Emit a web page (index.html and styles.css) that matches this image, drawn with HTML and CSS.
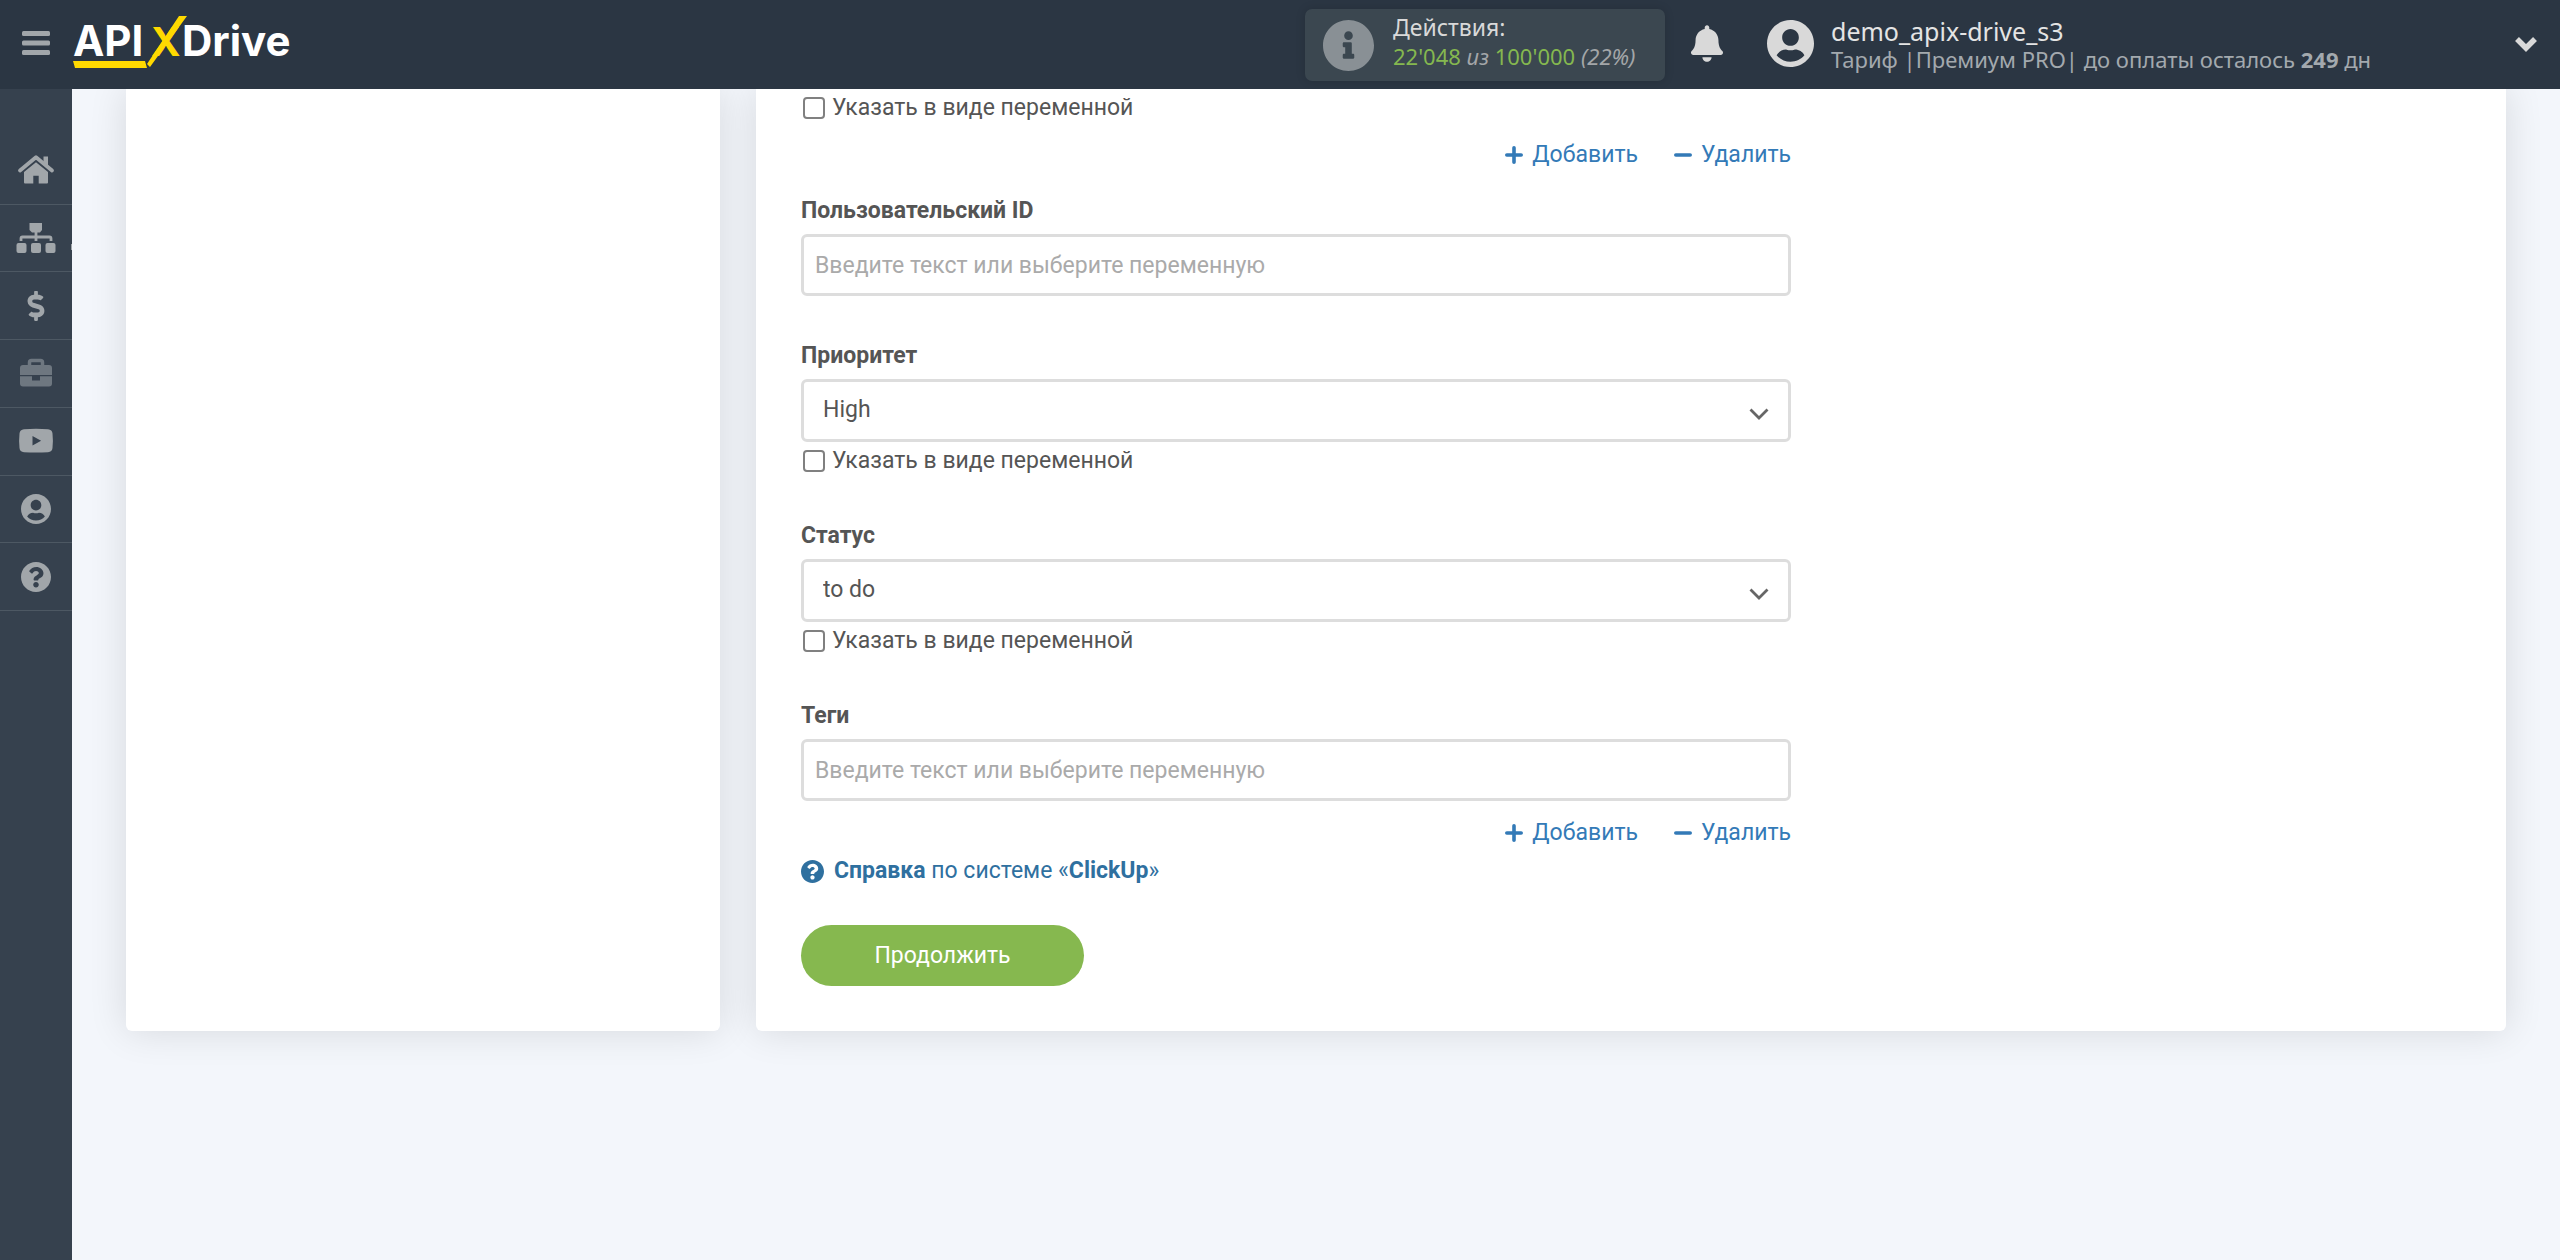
FILE: index.html
```html
<!DOCTYPE html>
<html lang="ru">
<head>
<meta charset="utf-8">
<meta name="viewport" content="width=device-width, initial-scale=1">
<title>ApiX-Drive</title>
<link rel="stylesheet" href="styles.css">
</head>
<body>
<svg class="sprite" aria-hidden="true">
  <symbol id="i-user" viewBox="0 8 496 496"><path d="M248 8C111 8 0 119 0 256s111 248 248 248 248-111 248-248S385 8 248 8zm0 96c48.600 0 88 39.400 88 88s-39.400 88-88 88-88-39.400-88-88 39.400-88 88-88zm0 344c-58.700 0-111.300-26.600-146.500-68.200 18.800-35.400 55.600-59.800 98.500-59.800 2.400 0 4.800.4 7.100 1.100 13 4.200 26.600 6.900 40.900 6.900 14.300 0 28-2.700 40.900-6.900 2.300-.7 4.700-1.100 7.100-1.100 42.900 0 79.700 24.400 98.500 59.800C359.300 421.400 306.700 448 248 448z"/></symbol>
  <symbol id="i-question" viewBox="8 8 496 496"><path d="M504 256c0 136.997-111.043 248-248 248S8 392.997 8 256C8 119.083 119.043 8 256 8s248 111.083 248 248zM262.655 90c-54.497 0-89.255 22.957-116.549 63.758-3.536 5.286-2.353 12.415 2.715 16.258l34.699 26.310c5.205 3.947 12.621 3.008 16.665-2.122 17.864-22.658 30.113-35.797 57.303-35.797 20.429 0 45.698 13.148 45.698 32.958 0 14.976-12.363 22.667-32.534 33.976C247.128 238.528 216 254.941 216 296v4c0 6.627 5.373 12 12 12h56c6.627 0 12-5.373 12-12v-1.333c0-28.462 83.186-29.647 83.186-106.667 0-58.002-60.165-102-116.531-102zM256 338c-25.365 0-46 20.635-46 46 0 25.364 20.635 46 46 46s46-20.636 46-46c0-25.365-20.635-46-46-46z"/></symbol>
  <symbol id="i-plus" viewBox="0 0 18 18"><path d="M9 1.800v14.400M1.800 9h14.400" stroke="currentColor" stroke-width="3.600" stroke-linecap="round"/></symbol>
  <symbol id="i-minus" viewBox="0 0 18 18"><path d="M1.800 9h14.400" stroke="currentColor" stroke-width="3.600" stroke-linecap="round"/></symbol>
  <symbol id="i-arrow" viewBox="0 0 20 12"><path d="M1.500 1.500 10 10l8.500-8.500" fill="none" stroke="currentColor" stroke-width="2.800"/></symbol>
</svg>

<header class="header">
  <button class="burger" type="button" aria-label="Меню">
    <svg viewBox="0 0 28 24" width="28" height="24"><rect width="28" height="5" rx="1.500"/><rect y="9.500" width="28" height="5" rx="1.500"/><rect y="19" width="28" height="5" rx="1.500"/></svg>
  </button>
  <a class="logo" href="#" aria-label="APIXDrive">
    <svg viewBox="0 0 222 60" width="222" height="60">
      <text class="logo__word" x="1" y="44">API</text>
      <text class="logo__word logo__word--x" x="79" y="44">X</text>
      <text class="logo__word" x="110" y="44">Drive</text>
      <path class="logo__mark" d="M75 52 107 4h8L78 55zM1 49h72l2 7H3z"/>
    </svg>
  </a>
  <div class="actions">
    <svg class="actions__icon" viewBox="8 8 496 496"><path d="M256 8C119.043 8 8 119.083 8 256c0 136.997 111.043 248 248 248s248-111.003 248-248C504 119.083 392.957 8 256 8zm0 110c23.196 0 42 18.804 42 42s-18.804 42-42 42-42-18.804-42-42 18.804-42 42-42zm56 254c0 6.627-5.373 12-12 12h-88c-6.627 0-12-5.373-12-12v-24c0-6.627 5.373-12 12-12h12v-64h-12c-6.627 0-12-5.373-12-12v-24c0-6.627 5.373-12 12-12h64c6.627 0 12 5.373 12 12v100h12c6.627 0 12 5.373 12 12v24z"/></svg>
    <div>
      <div class="actions__title">Действия:</div>
      <div class="actions__count"><span class="num">22'048</span> <i>из</i> <span class="num">100'000</span> <i>(22%)</i></div>
    </div>
  </div>
  <button class="bell" type="button" aria-label="Уведомления">
    <svg viewBox="0 0 448 512" width="32" height="37"><path d="M224 512c35.320 0 63.970-28.650 63.970-64H160.030c0 35.350 28.650 64 63.970 64zm215.390-149.710c-19.320-20.760-55.470-51.990-55.470-154.290 0-77.700-54.480-139.900-127.940-155.160V32c0-17.670-14.320-32-31.980-32s-31.980 14.330-31.980 32v20.840C118.560 68.100 64.080 130.300 64.080 208c0 102.300-36.150 133.530-55.470 154.290-6 6.450-8.660 14.160-8.610 21.710.11 16.400 12.980 32 32.100 32h383.800c19.120 0 32-15.600 32.100-32 .05-7.550-2.610-15.270-8.610-21.710z"/></svg>
  </button>
  <div class="account">
    <svg class="account__icon"><use href="#i-user"/></svg>
    <div class="account__text">
      <div class="account__name">demo_apix-drive_s3</div>
      <div class="account__plan">Тариф |Премиум PRO| до оплаты осталось <b>249</b> дн</div>
    </div>
    <button class="account__toggle" type="button" aria-label="Профиль">
      <svg viewBox="0 0 24 16" width="24" height="16"><path d="m3 3 9 9 9-9" fill="none" stroke="currentColor" stroke-width="5.500"/></svg>
    </button>
  </div>
</header>

<div class="layout">
  <nav class="sidebar">
    <ul class="menu">
      <li class="menu__item"><a class="menu__link" href="#" aria-label="Главная"><svg viewBox="0 0 40 40"><path d="m4 20.500 16-13.300 16 13.300" fill="none" stroke="currentColor" stroke-width="3.800" stroke-linecap="round" stroke-linejoin="round"/><path d="M27.500 6.500H32v9.500l-4.500-4zM8 22l12-9.800L32 22v10.500q0 1-1 1h-8.300V25.700h-5.400v7.800H9q-1 0-1-1z"/></svg></a></li>
      <li class="menu__item menu__item--marker"><a class="menu__link" href="#" aria-label="Связи"><svg viewBox="0 0 40 40"><path d="M13.500 5h12.500v7l-2 2.500H16l-2.500-2.500z"/><path d="M20 14v9M5 23v-2.500q0-1.500 1.500-1.500h27q1.500 0 1.500 1.500V23" fill="none" stroke="currentColor" stroke-width="2.800"/><rect x=".5" y="25" width="10" height="10" rx="2"/><rect x="15" y="25" width="10" height="10" rx="2"/><rect x="29.500" y="25" width="10" height="10" rx="2"/></svg></a></li>
      <li class="menu__item"><a class="menu__link" href="#" aria-label="Оплата"><svg class="menu__icon--s" viewBox="-112 0 512 512"><path d="M209.200 233.400l-108-31.600C88.700 198.200 80 186.500 80 173.500c0-16.300 13.200-29.500 29.500-29.500h66.300c12.200 0 24.200 3.700 34.200 10.500 6.100 4.100 14.300 3.100 19.500-2l34.800-34c7.100-6.900 6.100-18.400-1.800-24.500C238 74.800 207.400 64.100 176 64V16c0-8.800-7.200-16-16-16h-32c-8.800 0-16 7.200-16 16v48h-2.500C45.800 64-5.400 118.700.5 183.600c4.200 46.100 39.400 83.600 83.800 96.600l102.500 30c12.500 3.700 21.200 15.300 21.200 28.300 0 16.300-13.200 29.500-29.500 29.500h-66.300C100 368 88 364.300 78 357.500c-6.100-4.100-14.300-3.100-19.500 2l-34.800 34c-7.100 6.900-6.100 18.400 1.800 24.500 24.500 19.200 55.100 29.900 86.500 30v48c0 8.800 7.200 16 16 16h32c8.800 0 16-7.200 16-16v-48.200c46.600-.9 90.300-28.600 105.700-72.700 21.500-61.600-14.600-124.800-72.500-141.700z"/></svg></a></li>
      <li class="menu__item menu__item--dim"><a class="menu__link" href="#" aria-label="Проекты"><svg viewBox="0 0 40 40"><path d="M13.500 13V9.500q0-2 2-2h9q2 0 2 2V13" fill="none" stroke="currentColor" stroke-width="3.500"/><path d="M4 22v-7q0-3 3-3h26q3 0 3 3v7zM4 23.300h12V27.500h8v-4.200h12V30.500q0 3-3 3H7q-3 0-3-3z"/></svg></a></li>
      <li class="menu__item"><a class="menu__link" href="#" aria-label="Видео"><svg viewBox="0 0 40 40"><path fill-rule="evenodd" d="M8 8.300q12-1.300 24 0 4.200.5 4.500 4.200.8 7 0 14.500-.4 3.800-4.500 4.200-12 .8-24 0-4.200-.5-4.500-4.200-.8-7 0-14.500.4-3.800 4.500-4.200zM16.500 15v9.600l8.600-4.800z"/></svg></a></li>
      <li class="menu__item"><a class="menu__link" href="#" aria-label="Профиль"><svg class="menu__icon--s"><use href="#i-user"/></svg></a></li>
      <li class="menu__item"><a class="menu__link" href="#" aria-label="Помощь"><svg class="menu__icon--s"><use href="#i-question"/></svg></a></li>
    </ul>
  </nav>

  <main class="content">
    <aside class="card card--side"></aside>
    <form class="card card--main">
      <div class="form">
        <label class="check"><input class="check__box" type="checkbox">Указать в виде переменной</label>
        <div class="links links--top">
          <a class="link" href="#"><svg class="link__icon"><use href="#i-plus"/></svg>Добавить</a>
          <a class="link" href="#"><svg class="link__icon"><use href="#i-minus"/></svg>Удалить</a>
        </div>

        <div class="field field--text">
          <label class="field__label" for="custom-id">Пользовательский ID</label>
          <input class="input" id="custom-id" type="text" placeholder="Введите текст или выберите переменную">
        </div>

        <div class="field">
          <label class="field__label" for="priority">Приоритет</label>
          <div class="select">
            <select class="select__control" id="priority"><option>High</option></select>
            <svg class="select__arrow"><use href="#i-arrow"/></svg>
          </div>
          <label class="check"><input class="check__box" type="checkbox">Указать в виде переменной</label>
        </div>

        <div class="field">
          <label class="field__label" for="status">Статус</label>
          <div class="select">
            <select class="select__control" id="status"><option>to do</option></select>
            <svg class="select__arrow"><use href="#i-arrow"/></svg>
          </div>
          <label class="check"><input class="check__box" type="checkbox">Указать в виде переменной</label>
        </div>

        <div class="field field--last">
          <label class="field__label" for="tags">Теги</label>
          <input class="input" id="tags" type="text" placeholder="Введите текст или выберите переменную">
        </div>
        <div class="links links--bottom">
          <a class="link" href="#"><svg class="link__icon"><use href="#i-plus"/></svg>Добавить</a>
          <a class="link" href="#"><svg class="link__icon"><use href="#i-minus"/></svg>Удалить</a>
        </div>

        <a class="help" href="#"><svg class="help__icon"><use href="#i-question"/></svg><span><b>Справка</b> по системе «<b>ClickUp</b>»</span></a>
        <button class="submit" type="button">Продолжить</button>
      </div>
    </form>
  </main>
</div>
</body>
</html>
```

FILE: styles.css
```css
* {
  box-sizing: border-box;
}

body {
  margin: 0;
  min-height: 100vh;
  display: flex;
  flex-direction: column;
  background: #f3f6fb;
  color: #555;
  font: 23px/34px Roboto, "Liberation Sans", sans-serif;
}

button,
input,
select {
  font: inherit;
  color: inherit;
}

svg {
  display: block;
  fill: currentColor;
}

a {
  text-decoration: none;
}

.sprite {
  display: none;
}

/* Header */
.header {
  position: relative;
  z-index: 2;
  display: flex;
  align-items: center;
  height: 89px;
  background: #2b3643;
  color: #d9d9d9;
  font-family: "Noto Sans", "Open Sans", sans-serif;
}

.burger,
.bell,
.account__toggle {
  padding: 0;
  border: 0;
  background: none;
  cursor: pointer;
}

.burger {
  margin: 0 22px 4px;
  color: #a1a6aa;
}

.logo {
  margin-bottom: 5px;
}

.logo__word {
  fill: #fff;
  font: 700 42px Inter, sans-serif;
}

.logo__word--x {
  font-size: 40px;
}

.logo__word--x,
.logo__mark {
  fill: #ffd900;
}

.actions {
  display: flex;
  gap: 19px;
  width: 360px;
  height: 72px;
  margin-left: auto;
  padding: 2px 18px;
  border-radius: 7px;
  background: #3b4750;
  box-shadow: 0 0 10px rgba(0, 0, 0, .15);
  white-space: nowrap;
}

.actions__icon {
  width: 51px;
  height: 51px;
  margin-top: 9px;
  color: #899095;
}

.actions__title {
  font-size: 23px;
  line-height: 32px;
}

.actions__count {
  color: #a3a6a8;
  font-size: 22px;
  line-height: 26px;
}

.num {
  color: #85b84f;
}

.bell {
  margin: 0 44px 2px 26px;
}

.account {
  display: flex;
  align-items: center;
  padding: 0 22px 2px 0;
}

.account__icon {
  width: 47px;
  height: 47px;
  margin-right: 17px;
}

.account__text {
  width: 683px;
}

.account__name {
  color: #e4e4e4;
  font-size: 25px;
  line-height: 30px;
}

.account__plan {
  color: #a3a9ae;
  font-size: 22px;
  line-height: 26px;
}

/* Page frame */
.layout {
  display: flex;
  flex: 1;
}

.sidebar {
  flex: none;
  width: 72px;
  background: #36414e;
}

.menu {
  display: grid;
  grid-auto-rows: 1fr;
  height: 474px;
  margin: 48px 0 0;
  padding: 0;
  list-style: none;
}

.menu__item {
  position: relative;
  border-bottom: 1px solid #4d5863;
  color: #a1a6aa;
}

.menu__item--dim {
  color: #6e7780;
}

.menu__item--marker::after {
  content: "";
  position: absolute;
  right: 0;
  bottom: 21px;
  width: 1px;
  height: 6px;
  background: #a1a6aa;
}

.menu__link {
  display: flex;
  align-items: center;
  justify-content: center;
  height: 100%;
  color: inherit;
}

.menu__link svg {
  width: 40px;
  height: 40px;
}

.menu__link .menu__icon--s {
  width: 30px;
  height: 30px;
}

.content {
  display: flex;
  flex: 1;
  align-items: stretch;
  align-self: flex-start;
  gap: 36px;
  padding: 0 54px;
}

.card {
  border-radius: 0 0 6px 6px;
  background: #fff;
  box-shadow: 0 0 38px rgba(0, 0, 0, .12);
}

.card--side {
  flex: 0 0 calc(25% - 1px);
}

.card--main {
  flex: 1;
  padding: 2px 45px 45px;
}

/* Form */
.form {
  display: flex;
  flex-direction: column;
  align-items: stretch;
  max-width: 990px;
}

.check {
  display: flex;
  align-items: center;
  gap: 7px;
  padding-left: 2px;
}

.check__box {
  width: 22px;
  height: 22px;
  margin: 0;
  border: 2px solid #808080;
  border-radius: 4px;
  background: #fff;
  appearance: none;
}

.check__box:checked {
  border-color: #337ab7;
  background: #337ab7;
}

.links {
  display: flex;
  justify-content: flex-end;
  gap: 36px;
}

.links--top {
  margin: 13px 0 22px;
}

.links--bottom {
  margin: 15px 0 4px;
}

.link {
  display: flex;
  align-items: center;
  gap: 9px;
  color: #337ab7;
}

.link__icon {
  width: 18px;
  height: 18px;
}

.field {
  margin-bottom: 41px;
}

.field--text {
  margin-bottom: 43px;
}

.field--last {
  margin-bottom: 0;
}

.field__label {
  display: block;
  margin-bottom: 6px;
  font-weight: 700;
}

.input,
.select__control {
  display: block;
  width: 100%;
  border: 3px solid #ddd;
  border-radius: 6px;
  background: #fff;
}

.input {
  height: 62px;
  padding: 0 11px;
}

.input::placeholder {
  color: #aaa;
  opacity: 1;
}

.select {
  position: relative;
  margin-bottom: 2px;
}

.select__control {
  height: 63px;
  padding: 0 48px 2px 19px;
  appearance: none;
}

.select__arrow {
  position: absolute;
  top: 29px;
  right: 22px;
  width: 20px;
  height: 12px;
  color: #666;
  pointer-events: none;
}

.help {
  display: flex;
  align-items: center;
  align-self: flex-start;
  gap: 10px;
  color: #2f709f;
}

.help__icon {
  width: 23px;
  height: 23px;
}

.submit {
  align-self: flex-start;
  width: 283px;
  height: 61px;
  margin-top: 37px;
  padding: 0;
  border: 0;
  border-radius: 31px;
  background: #86b84f;
  color: #fff;
  cursor: pointer;
}
```
